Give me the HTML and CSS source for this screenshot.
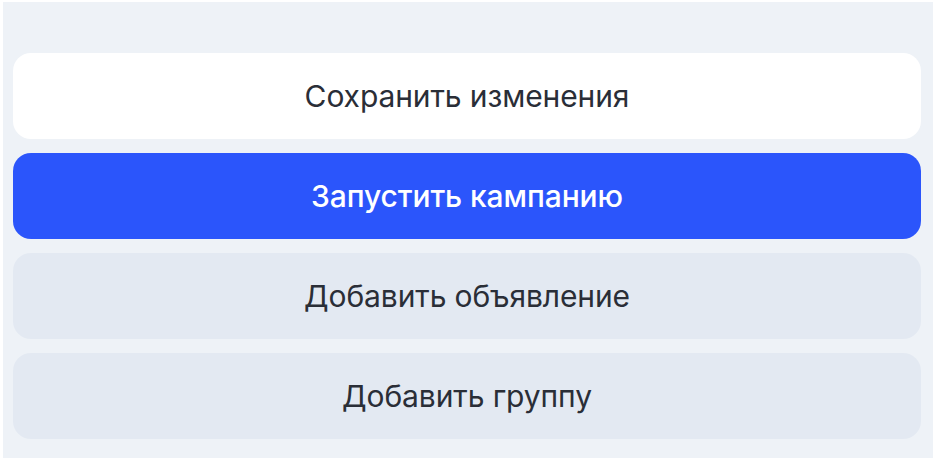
FILE: index.html
```html
<!DOCTYPE html>
<html lang="ru">
<head>
<meta charset="utf-8">
<link rel="stylesheet" href="styles.css">
</head>
<body>
<div class="panel">
  <div class="btn btn-white">Сохранить изменения</div>
  <div class="btn btn-primary">Запустить кампанию</div>
  <div class="btn btn-gray">Добавить объявление</div>
  <div class="btn btn-gray">Добавить группу</div>
</div>
</body>
</html>
```
FILE: styles.css
```css
html, body {
  margin: 0;
  padding: 0;
  background: #ffffff;
  width: 940px;
  height: 462px;
  overflow: hidden;
}
.panel {
  margin: 2px 7px 0 3px;
  height: 456px;
  box-sizing: border-box;
  background: #eef2f7;
  padding: 51px 12px 0 10px;
  display: flex;
  flex-direction: column;
  gap: 14px;
  font-family: Inter, "Noto Sans", sans-serif;
}
.btn {
  height: 86px;
  border-radius: 18px;
  display: flex;
  align-items: center;
  justify-content: center;
  font-size: 30px;
  color: #2a2e37;
  letter-spacing: -0.1px;
}
.btn-white { background: #ffffff; }
.btn-primary { background: #2b55fb; color: #ffffff; font-weight: 500; }
.btn-gray { background: #e3e9f2; }
```
